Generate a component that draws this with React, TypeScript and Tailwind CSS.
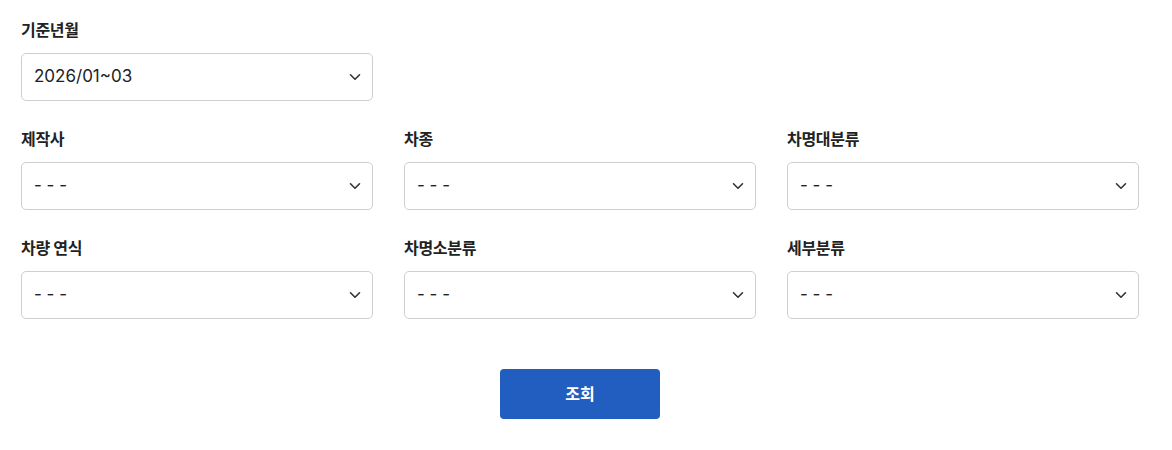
import React from "react";

// Search filter panel: year/month picker on top, six category selects in a
// 3-column grid, and the centered submit button.

const FONT = { fontFamily: 'Inter, "Noto Sans CJK KR", sans-serif' };

const FIELDS: { label: string; value: string }[] = [
  { label: "제작사", value: "- - -" },
  { label: "차종", value: "- - -" },
  { label: "차명대분류", value: "- - -" },
  { label: "차량 연식", value: "- - -" },
  { label: "차명소분류", value: "- - -" },
  { label: "세부분류", value: "- - -" },
];

function Chevron() {
  return (
    <svg width="12" height="8" viewBox="0 0 12 8" fill="none" className="shrink-0">
      <path d="M1.5 1.75 6 6.25l4.5-4.5" stroke="#333" strokeWidth="1.6" strokeLinecap="round" strokeLinejoin="round" />
    </svg>
  );
}

function Field({ label, value }: { label: string; value: string }) {
  return (
    <div className="flex flex-col">
      <div className="h-5 leading-5 text-[16px] font-bold text-[#222] tracking-[-0.3px] mb-[13px]">
        {label}
      </div>
      <div className="h-[48px] flex items-center justify-between pl-[12px] pr-[11px] border border-[#cfcfcf] rounded-[5px] bg-white">
        <span className="text-[17px] text-[#222]">{value}</span>
        <Chevron />
      </div>
    </div>
  );
}

export default function App() {
  return (
    <div className="bg-white w-[1172px] h-[450px] pt-5" style={FONT}>
      <div className="ml-[21px] w-[1118px]">
        <div className="grid grid-cols-3 gap-x-[31px] gap-y-[28px]">
          <Field label="기준년월" value="2026/01~03" />
          <div />
          <div />
          {FIELDS.map((f) => (
            <Field key={f.label} label={f.label} value={f.value} />
          ))}
        </div>
        <div className="flex justify-center mt-[50px]">
          <button className="w-[160px] h-[50px] rounded-[4px] bg-[#215ebf] text-white text-[16px] font-bold">
            조회
          </button>
        </div>
      </div>
    </div>
  );
}
